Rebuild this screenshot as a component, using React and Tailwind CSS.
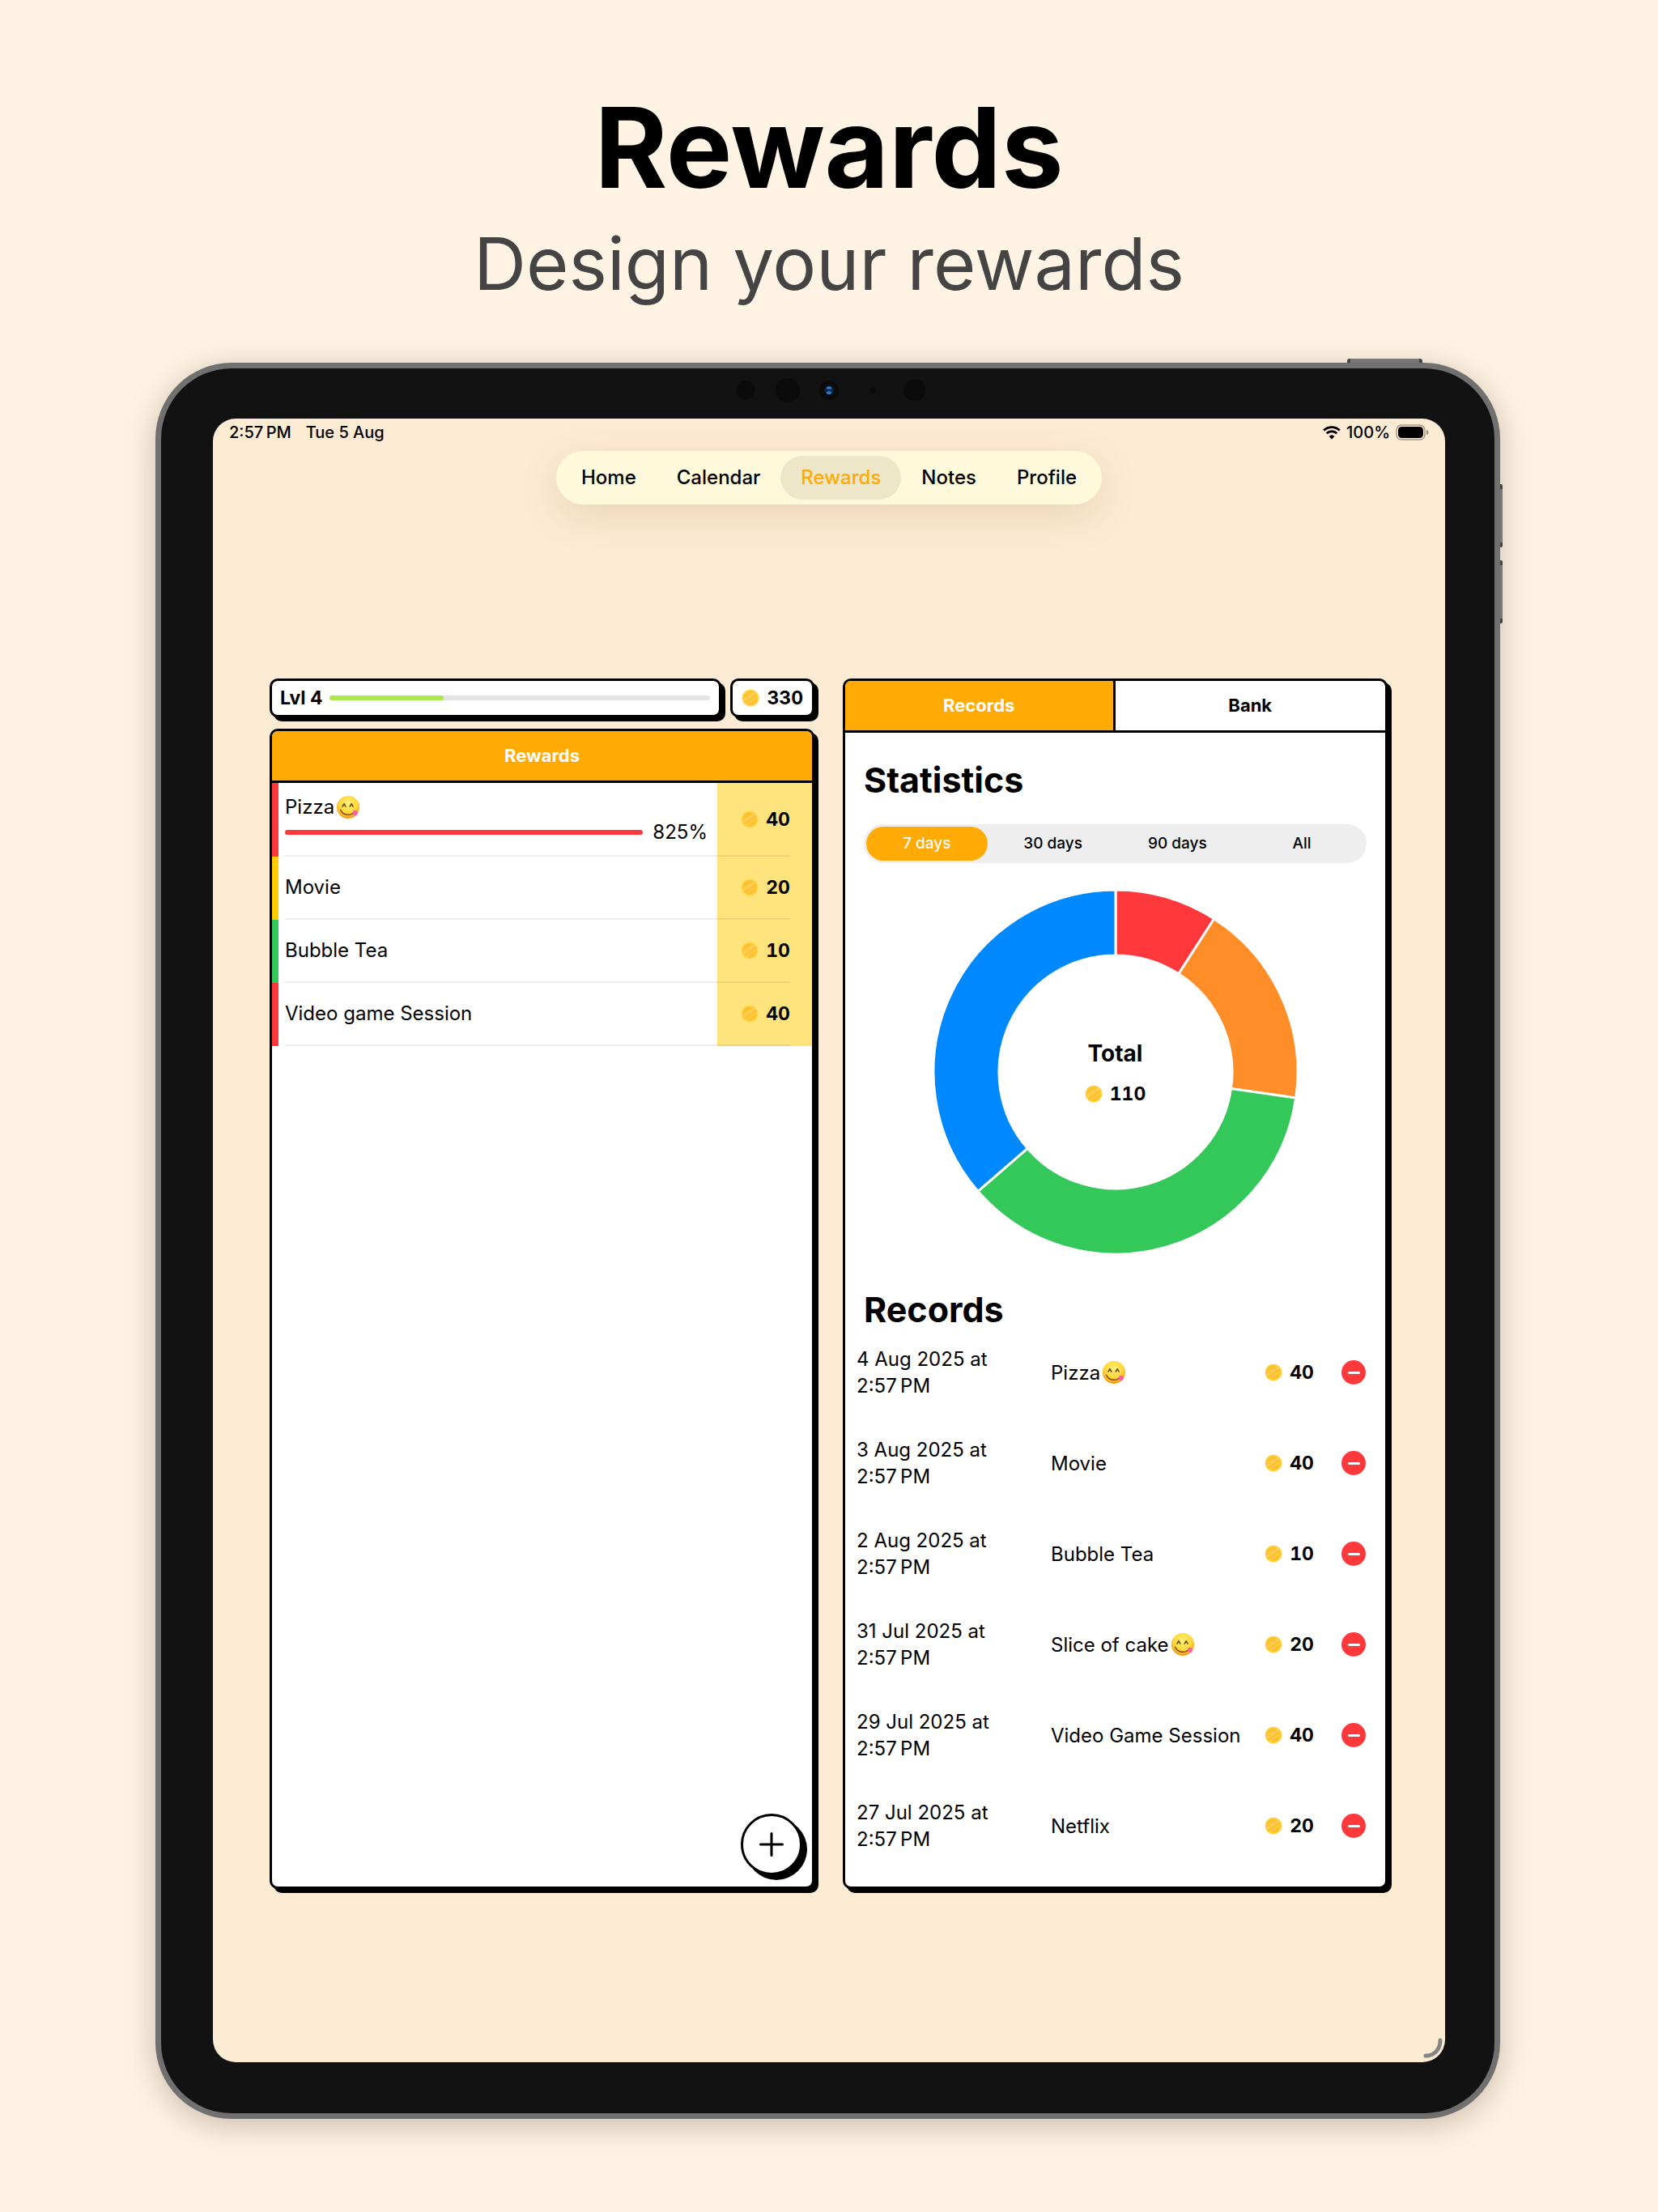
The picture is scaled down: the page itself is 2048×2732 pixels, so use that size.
import React, { useId, useState } from "react";

function Coin({ className }) {
  const id = useId();
  return (
    <svg viewBox="0 0 22 22" className={className} aria-hidden="true">
      <defs>
        <clipPath id={id}>
          <circle cx="11" cy="11" r="9" />
        </clipPath>
      </defs>
      <circle cx="11" cy="11" r="10.5" fill="#FFD54A" />
      <circle cx="11" cy="11" r="9" fill="#FFC22F" />
      <g clipPath={`url(#${id})`} stroke="#FFCD55">
        <path d="M0 16 18 4" strokeWidth="3.500" />
        <path d="M4 20 22 8" strokeWidth="1.500" />
      </g>
    </svg>
  );
}

function Yum() {
  const id = useId();
  return (
    <svg viewBox="0 0 32 32" className="ml-[2px] size-[30px] shrink-0" role="img" aria-label="😋">
      <defs>
        <radialGradient id={id} cx="0.5" cy="0.35" r="0.65">
          <stop offset="0" stopColor="#FFF27A" />
          <stop offset="0.6" stopColor="#FFD83A" />
          <stop offset="1" stopColor="#F2981E" />
        </radialGradient>
      </defs>
      <circle cx="16" cy="16" r="15" fill={`url(#${id})`} />
      <path d="M8.500 15 10.600 11.500l2.100 3.500M18.300 15 20.400 11.500l2.100 3.500" fill="none" stroke="#7A4A0C" strokeWidth="1.700" strokeLinecap="round" strokeLinejoin="round" />
      <path d="M6 19.500c3 7.500 14 8.500 18 2.500" fill="none" stroke="#8A4F0C" strokeWidth="1.600" strokeLinecap="round" />
      <path d="M22.500 22c1-2.500 4.500-2.500 5.800 0 1.200 2.800-1 5.300-3.500 4.500-2.200-.700-3.200-2.500-2.300-4.500Z" fill="#FB5CB0" />
    </svg>
  );
}

function Amount({ value }) {
  return (
    <span className="flex items-center gap-[9px] text-[23px] leading-8 font-bold tabular-nums">
      <Coin className="size-[22px]" />
      {value}
    </span>
  );
}

const CARD = "rounded-[10px] border-3 border-black bg-white shadow-[5px_5px_0_#000]";

const REWARDS = [
  { name: "Pizza", yum: true, cost: 40, strip: "bg-[#FF383C]", progress: "825%" },
  { name: "Movie", cost: 20, strip: "bg-[#FFCC00]" },
  { name: "Bubble Tea", cost: 10, strip: "bg-[#34C759]" },
  { name: "Video game Session", cost: 40, strip: "bg-[#FF383C]" },
];

const RECORDS = [
  { date: "4 Aug 2025 at", name: "Pizza", yum: true, cost: 40 },
  { date: "3 Aug 2025 at", name: "Movie", cost: 40 },
  { date: "2 Aug 2025 at", name: "Bubble Tea", cost: 10 },
  { date: "31 Jul 2025 at", name: "Slice of cake", yum: true, cost: 20 },
  { date: "29 Jul 2025 at", name: "Video Game Session", cost: 40 },
  { date: "27 Jul 2025 at", name: "Netflix", cost: 20 },
];

const SLICES = [
  { value: 10, color: "#FF383C" },
  { value: 20, color: "#FF8D28" },
  { value: 40, color: "#34C759" },
  { value: 40, color: "#0088FF" },
];

function Donut() {
  const total = SLICES.reduce((sum, s) => sum + s.value, 0);
  const at = (turn, r) => {
    const a = turn * 2 * Math.PI - Math.PI / 2;
    return `${225 + r * Math.cos(a)} ${225 + r * Math.sin(a)}`;
  };
  let start = 0;
  return (
    <svg viewBox="0 0 450 450" className="size-[450px]" role="img" aria-label="Coins spent by reward">
      {SLICES.map((s) => {
        const from = start;
        const to = (start += s.value / total);
        return (
          <path
            key={s.color}
            d={`M${at(from, 225)}A225 225 0 0 1 ${at(to, 225)}L${at(to, 144)}A144 144 0 0 0 ${at(from, 144)}Z`}
            fill={s.color}
            stroke="#fff"
            strokeWidth="3"
          />
        );
      })}
    </svg>
  );
}

function StatusBar() {
  return (
    <div className="flex h-[34px] items-center justify-between px-5 text-[20px] leading-6 font-medium">
      <div className="flex gap-[18px]">
        <span>2:57&#8239;PM</span>
        <span>Tue 5 Aug</span>
      </div>
      <div className="flex items-center gap-[7px]">
        <svg viewBox="0 0 22 18" className="h-[18px] w-[22px]" aria-hidden="true">
          <g fill="none" stroke="#000" strokeWidth="2.800">
            <path d="M1.200 6.600a14 14 0 0 1 19.600 0" />
            <path d="M4.700 10.300a9 9 0 0 1 12.600 0" />
          </g>
          <path d="M11 17.500 7.600 13.900a5 5 0 0 1 6.800 0Z" />
        </svg>
        <span>100%</span>
        <svg viewBox="0 0 41 20" className="h-5 w-[41px]" aria-label="Battery full" role="img">
          <rect x="1" y="1" width="35" height="18" rx="6" fill="none" stroke="#000" strokeOpacity=".35" strokeWidth="1.500" />
          <rect x="3" y="3" width="31" height="14" rx="4.500" />
          <path d="M38 7c2 .5 2.500 1.800 2.500 3S40 12.500 38 13Z" fillOpacity=".4" />
        </svg>
      </div>
    </div>
  );
}

function Nav() {
  const items = ["Home", "Calendar", "Rewards", "Notes", "Profile"];
  return (
    <nav className="mx-auto mt-[6px] flex w-fit items-center rounded-full bg-[#FFF9DB] p-[6px] text-[24px] font-medium shadow-[0_14px_50px_rgba(120,80,20,0.14)]">
      {items.map((item) => (
        <a
          key={item}
          href={`#${item.toLowerCase()}`}
          className={`rounded-full px-[25px] leading-[54px] ${item === "Rewards" ? "bg-[#EEE6C8] text-[#FFAA05]" : "text-black"}`}
        >
          {item}
        </a>
      ))}
    </nav>
  );
}

function RewardsColumn() {
  return (
    <section className="flex min-w-0 flex-col gap-[14px]">
      <div className="flex gap-[11px]">
        <div className={`flex h-[48px] flex-1 items-center gap-2 pr-[11px] pl-[10px] text-[23px] font-bold ${CARD}`}>
          <span>Lvl 4</span>
          <div className="h-[6px] flex-1 rounded-full bg-[#E4E4E4]">
            <div className="h-full w-[30%] rounded-full bg-[#ABE84C]" />
          </div>
        </div>
        <div className={`flex h-[48px] items-center px-[11px] ${CARD}`}>
          <Amount value={330} />
        </div>
      </div>
      <div className={`flex flex-1 flex-col overflow-hidden ${CARD}`}>
        <h2 className="border-b-3 border-black bg-[#FFAA05] text-center text-[22px] leading-[61px] font-bold text-white">Rewards</h2>
        <ul className="text-[24px]">
          {REWARDS.map((r) => (
            <li key={r.name} className="flex items-stretch">
              <div className={`w-2 shrink-0 ${r.strip}`} />
              <div className="ml-2 flex min-w-0 flex-1 flex-col border-b-2 border-black/7 pr-3">
                {r.progress ? (
                  <div className="pt-[15px] pb-[12px]">
                    <p className="flex items-center leading-[30px]">
                      {r.name}
                      <Yum />
                    </p>
                    <div className="flex items-center gap-3 leading-8">
                      <div className="h-[6px] flex-1 rounded-full bg-[#FF383C]" />
                      <span>{r.progress}</span>
                    </div>
                  </div>
                ) : (
                  <p className="leading-[76px]">{r.name}</p>
                )}
              </div>
              <div className="flex w-[117px] shrink-0 bg-[#FFE47E] pr-[27px]">
                <div className="flex flex-1 items-center justify-end border-b-2 border-black/7">
                  <Amount value={r.cost} />
                </div>
              </div>
            </li>
          ))}
        </ul>
        <button
          type="button"
          aria-label="Add reward"
          className="mt-auto mr-3 mb-[14px] flex size-[76px] items-center justify-center self-end rounded-full border-3 border-black bg-white shadow-[6px_6px_0_#000]"
        >
          <svg viewBox="0 0 30 30" className="size-[30px]" aria-hidden="true">
            <path d="M15 1.500v27M1.500 15h27" stroke="#000" strokeWidth="3" strokeLinecap="round" />
          </svg>
        </button>
      </div>
    </section>
  );
}

function RecordsColumn() {
  const [range, setRange] = useState("7 days");
  return (
    <section className={`flex min-w-0 flex-col overflow-hidden ${CARD}`}>
      <div className="grid grid-cols-2 border-b-3 border-black text-[22px] leading-[61px] font-bold">
        <button type="button" className="border-r-3 border-black bg-[#FFAA05] text-white">Records</button>
        <button type="button">Bank</button>
      </div>
      <div className="px-[23px] pt-[30px]">
        <h2 className="text-[43px] leading-[56px] font-bold">Statistics</h2>
        <div className="mt-[27px] grid grid-cols-4 rounded-full bg-[#EEEEEE] p-[3px] text-[19px] leading-[42px] font-medium">
          {["7 days", "30 days", "90 days", "All"].map((label) => (
            <button
              key={label}
              type="button"
              onClick={() => setRange(label)}
              className={`rounded-full ${range === label ? "mr-1 bg-[#FFAA05] text-white" : ""}`}
            >
              {label}
            </button>
          ))}
        </div>
        <div className="mt-[33px] grid place-items-center">
          <div className="col-start-1 row-start-1">
            <Donut />
          </div>
          <div className="col-start-1 row-start-1 flex flex-col items-center gap-[18px] pt-1">
            <p className="text-[28px] leading-8 font-bold">Total</p>
            <Amount value={110} />
          </div>
        </div>
        <h2 className="mt-[40px] text-[43px] leading-[56px] font-bold">Records</h2>
      </div>
      <ul className="flex flex-col gap-[46px] pt-[17px] pb-[42px] pl-[14px] text-[24px]">
        {RECORDS.map((r) => (
          <li key={r.date} className="flex items-center leading-[33px]">
            <p className="w-[240px] shrink-0">
              {r.date}
              <br />
              2:57&#8239;PM
            </p>
            <p className="flex flex-1 items-center whitespace-nowrap">
              {r.name}
              {r.yum && <Yum />}
            </p>
            <Amount value={r.cost} />
            <button
              type="button"
              aria-label={`Remove ${r.name}`}
              className="mr-6 ml-[34px] flex size-[30px] shrink-0 items-center justify-center rounded-full bg-[#FF383C]"
            >
              <span className="h-[3px] w-[15px] rounded-full bg-white" />
            </button>
          </li>
        ))}
      </ul>
    </section>
  );
}

export default function App() {
  return (
    <main className="min-h-screen bg-[#FFF4E4] font-['Inter',sans-serif] text-black">
      <header className="pt-[98px] text-center">
        <h1 className="text-[137px] leading-[168px] font-bold">Rewards</h1>
        <p className="pt-[6px] text-[90px] leading-[108px] text-[#444444]">Design your rewards</p>
      </header>
      <div className="pt-[68px] pr-[195px] pb-[115px] pl-[192px]">
        <div className="relative rounded-[94px] bg-[#707070] p-[7px] shadow-[0_8px_40px_rgba(70,40,20,0.28)]">
          <div className="absolute -top-[5px] right-[96px] h-[5px] w-[93px] rounded-t-[3px] border-x-4 border-[#444] bg-[#777]" />
          <div className="absolute top-[150px] -right-[3px] h-[78px] w-[3px] rounded-r-[2px] border-y-6 border-[#444] bg-[#777]" />
          <div className="absolute top-[244px] -right-[3px] h-[78px] w-[3px] rounded-r-[2px] border-y-6 border-[#444] bg-[#777]" />
          <div className="rounded-[87px] bg-[#121212] pr-[61px] pb-[63px] pl-[64px]">
            <div className="flex h-[62px] items-center justify-center pb-[9px]" aria-hidden="true">
              <svg viewBox="0 0 240 32" className="h-8 w-[240px]">
                <g fill="#0B0B0B">
                  <circle cx="17" cy="16" r="11.500" />
                  <circle cx="69" cy="16" r="15" />
                  <circle cx="120" cy="16" r="12" />
                  <circle cx="174" cy="16" r="3.500" />
                  <circle cx="226" cy="16" r="13.500" />
                </g>
                <circle cx="120" cy="16" r="5.500" fill="#0A2A50" />
                <ellipse cx="120" cy="13" rx="3" ry="1.800" fill="#2A7CC8" />
                <ellipse cx="120" cy="19" rx="3" ry="1.800" fill="#2A7CC8" />
              </svg>
            </div>
            <div className="relative overflow-hidden rounded-[28px] bg-[#FDEBD4]">
              <StatusBar />
              <Nav />
              <div className="mt-[215px] grid grid-cols-2 gap-[35px] pr-[71px] pb-[214px] pl-[70px]">
                <RewardsColumn />
                <RecordsColumn />
              </div>
              <svg viewBox="0 0 26 26" className="absolute right-[2px] bottom-[4px] size-[26px]" aria-hidden="true">
                <path d="M22 3C22 14 15 22 4 22" fill="none" stroke="#858585" strokeWidth="5" strokeLinecap="round" />
              </svg>
            </div>
          </div>
        </div>
      </div>
    </main>
  );
}
